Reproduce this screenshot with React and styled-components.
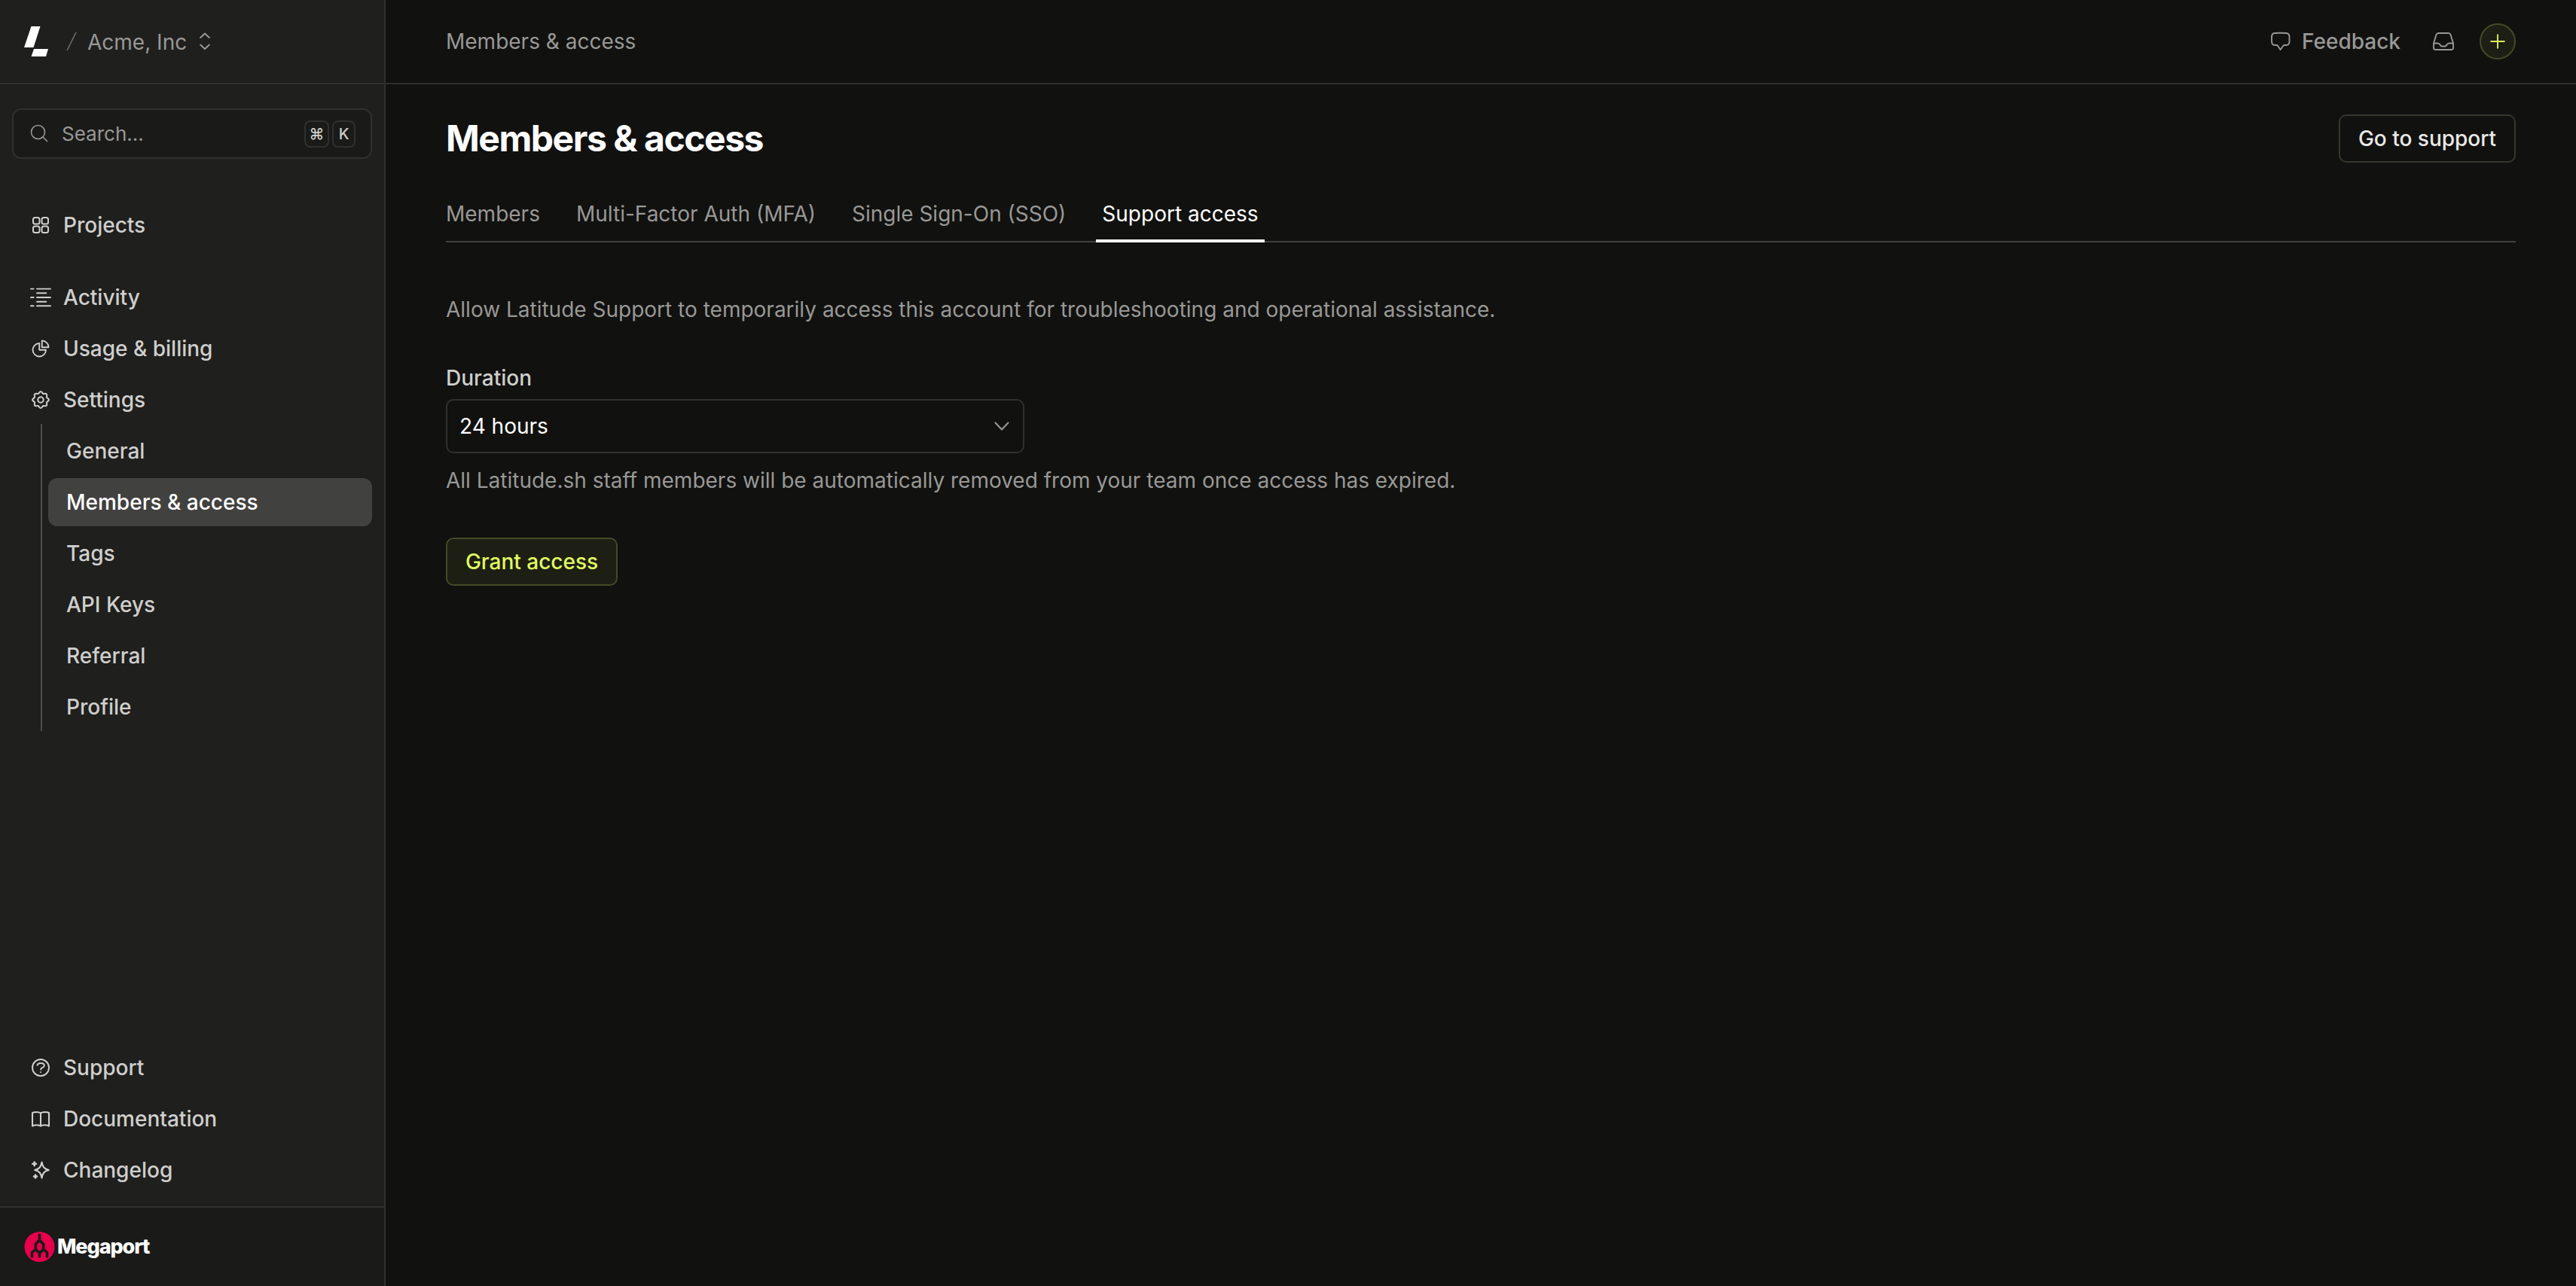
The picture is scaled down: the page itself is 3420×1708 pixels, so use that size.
import React from "react";
import styled, { createGlobalStyle } from "styled-components";

const GlobalStyle = createGlobalStyle`
  * {
    box-sizing: border-box;
  }
  body {
    margin: 0;
    background: #11110f;
    font-family: Inter, "Liberation Sans", sans-serif;
    font-size: 28px;
    line-height: 40px;
    -webkit-font-smoothing: antialiased;
  }
  button {
    font-family: inherit;
    margin: 0;
  }
`;

const Layout = styled.div`
  display: flex;
  height: 1708px;
`;

const Sidebar = styled.aside`
  width: 512px;
  flex: none;
  display: flex;
  flex-direction: column;
  background: #1f1f1d;
  border-right: 2px solid #30302e;
`;

const TeamBar = styled.div`
  height: 112px;
  flex: none;
  display: flex;
  align-items: center;
  padding: 0 32px;
  border-bottom: 2px solid #30302e;
  color: #989896;
`;

const Slash = styled.svg`
  margin: 0 14px 0 24px;
`;

const TeamName = styled.span`
  padding-top: 1px;
`;

const Updown = styled.svg`
  margin-left: 17px;
`;

const SearchBox = styled.div`
  margin: 32px 16px 56px;
  height: 67px;
  display: flex;
  align-items: center;
  padding: 0 20px 0 22px;
  border: 2px solid #30302e;
  border-radius: 12px;
  background: #1a1a18;
  color: #989896;
`;

const SearchText = styled.span`
  flex: 1;
  margin-left: 17px;
  font-size: 26px;
`;

const Key = styled.kbd`
  width: ${(p) => p.$width};
  height: 36px;
  margin-left: 4px;
  display: flex;
  align-items: center;
  justify-content: center;
  border: 2px solid #30302e;
  border-radius: 8px;
  color: #cfcfcd;
  font-family: inherit;
  font-size: 20px;
  font-weight: 500;
`;

const Nav = styled.nav`
  display: flex;
  flex-direction: column;
  gap: 4px;
  padding: 0 16px;
`;

const NavItem = styled.a`
  height: 64px;
  display: flex;
  align-items: center;
  gap: 16px;
  padding: 0 24px;
  margin-bottom: ${(p) => (p.$spaced ? "28px" : 0)};
  border-radius: 12px;
  font-weight: 500;
  color: ${(p) => (p.$active ? "#fff" : "#cfcfcd")};
  background: ${(p) => (p.$active ? "#41413f" : "transparent")};
`;

const SubNav = styled.div`
  display: flex;
  flex-direction: column;
  gap: 4px;
  margin: -4px 0 0 38px;
  padding: 4px 0 0 8px;
  border-left: 2px solid #4d4d4b;
`;

const Spacer = styled.div`
  flex: 1;
`;

const Partner = styled.div`
  height: 106px;
  flex: none;
  display: flex;
  align-items: center;
  gap: 3px;
  margin-top: 16px;
  padding: 0 32px;
  border-top: 2px solid #30302e;
  background: #1a1a18;
  color: #fff;
  font-size: 27px;
  font-weight: 800;
  letter-spacing: -1.1px;
`;

const Main = styled.main`
  flex: 1;
`;

const TopBar = styled.header`
  height: 112px;
  display: flex;
  align-items: center;
  padding: 0 80px;
  border-bottom: 2px solid #30302e;
  color: #989896;
`;

const TopActions = styled.div`
  display: flex;
  align-items: center;
  margin-left: auto;
`;

const Feedback = styled.span`
  margin: 0 42px 0 15px;
  font-weight: 500;
`;

const AddButton = styled.button`
  width: 48px;
  height: 48px;
  margin-left: 33px;
  padding: 0;
  display: flex;
  align-items: center;
  justify-content: center;
  border: 2px solid #444a27;
  border-radius: 50%;
  background: #1e1f14;
`;

const Content = styled.div`
  padding: 40px 80px;
`;

const TitleRow = styled.div`
  display: flex;
  align-items: center;
  justify-content: space-between;
`;

const Title = styled.h1`
  margin: 0;
  color: #fff;
  font-size: 48px;
  line-height: 64px;
  font-weight: 700;
  letter-spacing: -1.44px;
`;

const Button = styled.button`
  height: 64px;
  width: ${(p) => p.$width};
  padding: 0;
  border: 2px solid ${(p) => (p.$accent ? "#444a27" : "#35362c")};
  border-radius: 10px;
  background: ${(p) => (p.$accent ? "#1e1f14" : "transparent")};
  color: ${(p) => (p.$accent ? "#e1fb63" : "#e9e9e7")};
  font-size: 28px;
  line-height: 40px;
  font-weight: 500;
`;

const Tabs = styled.div`
  display: flex;
  gap: 32px;
  height: 82px;
  margin-top: 24px;
  padding-top: 24px;
  box-shadow: inset 0 -2px #41413f;
`;

const Tab = styled.a`
  padding: 0 8px;
  color: ${(p) => (p.$active ? "#fff" : "#989896")};
  border-bottom: 4px solid ${(p) => (p.$active ? "#fff" : "transparent")};
  &:first-child {
    padding-left: 0;
  }
`;

const Text = styled.p`
  margin: ${(p) => p.$margin};
  color: #989896;
`;

const Label = styled.label`
  display: block;
  color: #cfcfcd;
  font-weight: 500;
`;

const Select = styled.div`
  width: 768px;
  height: 72px;
  margin-top: 8px;
  padding: 0 18px 0 16px;
  display: flex;
  align-items: center;
  justify-content: space-between;
  border: 2px solid #30302e;
  border-radius: 10px;
  color: #fff;
`;

const Stroke = ({ children, width = 1.9 }) => (
  <svg width="28" height="28" viewBox="0 0 28 28" fill="none" stroke="currentColor" strokeWidth={width} strokeLinecap="round" strokeLinejoin="round">
    {children}
  </svg>
);

// eight rounded teeth around the hub
const gear = Array.from({ length: 96 }, (_, i) => {
  const a = (i / 96) * Math.PI * 2;
  const r = 9.8 + 1.1 * Math.cos(8 * a);
  return `${(14 + r * Math.cos(a)).toFixed(2)} ${(14 + r * Math.sin(a)).toFixed(2)}`;
}).join("L");

const icons = {
  projects: (
    <Stroke width={2}>
      <rect x="4" y="4" width="8.5" height="8.5" rx="2.5" />
      <rect x="15.5" y="4" width="8.5" height="8.5" rx="2.5" />
      <rect x="4" y="15.5" width="8.5" height="8.5" rx="2.5" />
      <rect x="15.5" y="15.5" width="8.5" height="8.5" rx="2.5" />
    </Stroke>
  ),
  activity: (
    <Stroke>
      <path d="M1 2.6h3.6M9 2.6h18M9 8.3h12.3M1 14h3.6M9 14h18M9 19.7h12.3M1 25.3h3.6M9 25.3h18" />
    </Stroke>
  ),
  usage: (
    <Stroke>
      <path d="M12.25 7a8.75 8.75 0 1 0 8.75 8.75h-8.75V7Z" />
      <path d="M15.75 12.25h8.75a8.75 8.75 0 0 0-8.75-8.75v8.75Z" />
    </Stroke>
  ),
  settings: (
    <Stroke width={2}>
      <path d={`M${gear}Z`} />
      <circle cx="14" cy="14" r="3.7" />
    </Stroke>
  ),
  support: (
    <Stroke>
      <circle cx="14" cy="14" r="11" />
      <path d="M9.500 10.700c.8-1.900 2.500-2.700 4.500-2.700 2.600 0 4.800 1.200 4.800 3.200 0 2.900-4.700 2.600-4.700 5.300M14 19.900v.1" />
    </Stroke>
  ),
  docs: (
    <Stroke width={2.1}>
      <path d="M14 6.300C11.500 4.700 6 4.500 3 6V23.500c3-1.700 8-1.700 11 0 3-1.700 8-1.700 11 0V6c-3-1.500-8.500-1.300-11 .300ZM14 6.300V23.500" />
    </Stroke>
  ),
  changelog: (
    <Stroke width={2.1}>
      <path d="M15.500 3.500c1.100 6.300 3 9 9.300 10.500-6.300 1.500-8.200 4.200-9.300 10.500C14.400 18.200 12.500 15.500 6.200 14c6.300-1.500 8.200-4.200 9.300-10.500Z" />
      <path d="M5.700 3.500v4.600M3.400 5.800H8M7 20.500v4M5 22.500h4" strokeWidth="2.600" />
    </Stroke>
  ),
};

const mainLinks = [
  { icon: "projects", label: "Projects", spaced: true },
  { icon: "activity", label: "Activity" },
  { icon: "usage", label: "Usage & billing" },
  { icon: "settings", label: "Settings" },
];
const settingsLinks = ["General", "Members & access", "Tags", "API Keys", "Referral", "Profile"];
const helpLinks = [
  { icon: "support", label: "Support" },
  { icon: "docs", label: "Documentation" },
  { icon: "changelog", label: "Changelog" },
];
const tabs = ["Members", "Multi-Factor Auth (MFA)", "Single Sign-On (SSO)", "Support access"];

const SideMenu = () => (
  <Sidebar>
    <TeamBar>
      <svg width="32" height="40" viewBox="0 0 32 40" fill="#fff">
        <path d="M9.500 0H21.500L12.500 28H0ZM13 30H32L29 40H9.500Z" />
      </svg>
      <Slash width="14" height="26" viewBox="0 0 14 26" stroke="#6f6f6d" strokeWidth="1.6">
        <path d="M1 25L13 1" />
      </Slash>
      <TeamName>Acme, Inc</TeamName>
      <Updown width="14" height="24" viewBox="0 0 14 24" fill="none" stroke="currentColor" strokeWidth="2" strokeLinecap="round" strokeLinejoin="round">
        <path d="M1.200 7L7 1.500 12.800 7M1.200 16.500L7 22l5.800-5.500" />
      </Updown>
    </TeamBar>
    <SearchBox>
      <svg width="25" height="25" viewBox="0 0 25 25" fill="none" stroke="currentColor" strokeWidth="1.600">
        <circle cx="10.500" cy="10.500" r="9" />
        <path d="M17 17l6 6" />
      </svg>
      <SearchText>Search...</SearchText>
      <Key $width="33px">⌘</Key>
      <Key $width="31px">K</Key>
    </SearchBox>
    <Nav>
      {mainLinks.map((l) => (
        <NavItem key={l.label} $spaced={l.spaced}>
          {icons[l.icon]}
          {l.label}
        </NavItem>
      ))}
      <SubNav>
        {settingsLinks.map((label) => (
          <NavItem key={label} $active={label === "Members & access"}>
            {label}
          </NavItem>
        ))}
      </SubNav>
    </Nav>
    <Spacer />
    <Nav>
      {helpLinks.map((l) => (
        <NavItem key={l.label}>
          {icons[l.icon]}
          {l.label}
        </NavItem>
      ))}
    </Nav>
    <Partner>
      <svg width="41" height="40" viewBox="0 0 41 40">
        <circle cx="20.500" cy="20" r="20" fill="#e6004c" />
        <path d="M20.500 4v7L15.300 16.500v7.500M20.500 11L25.700 16.500v7.500M10.500 33v-5.500l4.500-4 5.500 4.500 5.500-4.500 4.500 4V33M20.500 28v5" fill="none" stroke="#1a1a18" strokeWidth="3.600" strokeLinecap="round" strokeLinejoin="round" />
      </svg>
      Megaport
    </Partner>
  </Sidebar>
);

export default function App() {
  return (
    <Layout>
      <GlobalStyle />
      <SideMenu />
      <Main>
        <TopBar>
          <span>Members &amp; access</span>
          <TopActions>
            <svg width="27" height="26" viewBox="0 0 27 26" fill="none" stroke="currentColor" strokeWidth="1.900" strokeLinejoin="round">
              <path d="M6 2Q13.500 1.400 21 2Q25.500 2.300 25.500 7V13Q25.500 17.500 21.500 18H18L13.500 24 9.500 18H6Q2 17.500 2 13V7Q2 2.300 6 2Z" />
            </svg>
            <Feedback>Feedback</Feedback>
            <svg width="30" height="26" viewBox="0 0 30 26" fill="none" stroke="currentColor" strokeWidth="1.900" strokeLinejoin="round">
              <path d="M2 15.500L5.500 4Q6.200 2 8.500 2H21.500Q23.800 2 24.500 4L28 15.500V21.500Q28 24 25.500 24H4.500Q2 24 2 21.500ZM2 15.500H7.500Q9.500 15.500 10.500 17.500T13 19.500H17Q18.500 19.500 19.500 17.500T22.500 15.500H28" />
            </svg>
            <AddButton>
              <svg width="20" height="20" viewBox="0 0 20 20" stroke="#e1fb63" strokeWidth="1.800">
                <path d="M10 .5v19M.5 10h19" />
              </svg>
            </AddButton>
          </TopActions>
        </TopBar>
        <Content>
          <TitleRow>
            <Title>Members &amp; access</Title>
            <Button $width="235px">Go to support</Button>
          </TitleRow>
          <Tabs>
            {tabs.map((t) => (
              <Tab key={t} $active={t === "Support access"}>
                {t}
              </Tab>
            ))}
          </Tabs>
          <Text $margin="69px 0 51px">
            Allow Latitude Support to temporarily access this account for troubleshooting and operational assistance.
          </Text>
          <Label>Duration</Label>
          <Select>
            24 hours
            <svg width="20" height="13" viewBox="0 0 20 13" fill="none" stroke="#989896" strokeWidth="2" strokeLinecap="round" strokeLinejoin="round">
              <path d="M1.500 1.500L10 10.500l8.500-9" />
            </svg>
          </Select>
          <Text $margin="16px 0 56px">
            All Latitude.sh staff members will be automatically removed from your team once access has expired.
          </Text>
          <Button $accent $width="228px">Grant access</Button>
        </Content>
      </Main>
    </Layout>
  );
}
